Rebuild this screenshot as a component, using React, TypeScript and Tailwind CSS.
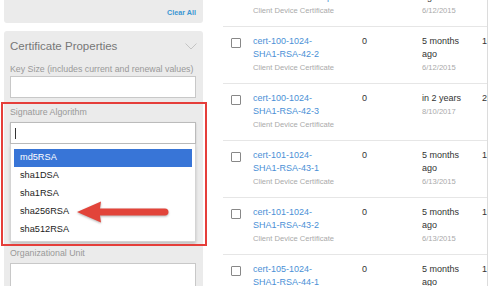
const certs = [
  { l1: 'cert-100-1024-', l2: 'SHA1-RSA-42-1-update', when: ['5 months', 'ago'], date: '6/12/2015', cnt: '10' },
  { l1: 'cert-100-1024-', l2: 'SHA1-RSA-42-2', when: ['5 months', 'ago'], date: '6/12/2015', cnt: '10' },
  { l1: 'cert-100-1024-', l2: 'SHA1-RSA-42-3', when: ['in 2 years'], date: '8/10/2017', cnt: '20' },
  { l1: 'cert-101-1024-', l2: 'SHA1-RSA-43-1', when: ['5 months', 'ago'], date: '6/13/2015', cnt: '10' },
  { l1: 'cert-101-1024-', l2: 'SHA1-RSA-43-2', when: ['5 months', 'ago'], date: '6/13/2015', cnt: '10' },
  { l1: 'cert-105-1024-', l2: 'SHA1-RSA-44-1', when: ['5 months', 'ago'], date: '6/13/2015', cnt: '10' },
]

const algorithms = ['md5RSA', 'sha1DSA', 'sha1RSA', 'sha256RSA', 'sha512RSA']

function Arrow() {
  return (
    <svg width="98" height="28" viewBox="0 0 98 28" className="absolute left-[70px] top-[167px] drop-shadow-[0_1px_1px_rgba(0,0,0,0.3)]">
      <path d="M3 14 L27 3.5 L26 10.5 L91 10.5 A3.5 3.5 0 0 1 91 17.5 L26 17.5 L27 24.5 Z" fill="#e2443a" />
    </svg>
  )
}

function FilterPanel() {
  return (
    <div className="w-[199px] h-[286px] ml-[4px] shrink-0 flex flex-col">
      <div className="h-[23px] shrink-0 bg-[#ebebeb] rounded-b-[3px] flex items-end justify-end pr-[7px] pb-[5px]">
        <span className="text-[7.2px] leading-[10px] font-bold text-[#3b97d3]">Clear All</span>
      </div>
      <div className="relative mt-[8px] flex-1 min-h-0 bg-[#ebebeb] rounded-t-[3px] px-[6px] pt-[7px] flex flex-col">
        <div className="flex items-center justify-between">
          <span className="text-[11.5px] leading-[16px] text-[#777]">Certificate Properties</span>
          <svg width="12" height="7" viewBox="0 0 12 7" className="mt-[1px]">
            <path d="M0.5 0.5 L6 6 L11.5 0.5" fill="none" stroke="#c4c4c4" strokeWidth="1" />
          </svg>
        </div>
        <div className="mt-[9px] text-[8.8px] leading-[12px] text-[#999] whitespace-nowrap">Key Size (includes current and renewal values)</div>
        <div className="mt-[1px] w-[186px] h-[22px] shrink-0 bg-white border border-[#c8c8c8]" />

        <div className="mt-[8px] text-[8.8px] leading-[12px] text-[#999]">Signature Algorithm</div>
        <div className="mt-[4px] w-[186px] h-[22px] shrink-0 bg-white border border-[#bbb] shadow-[0_1px_2px_rgba(0,0,0,0.15)] flex items-center pl-[4px]">
          <div className="w-px h-[11px] bg-[#333]" />
        </div>
        <div className="w-[186px] shrink-0 bg-white border border-[#d4d4d4] border-t-0 rounded-b-[2px] shadow-[0_2px_3px_rgba(0,0,0,0.18)] px-[3px] pt-[5px] pb-[2px] flex flex-col">
          {algorithms.map((a, i) => (
            <div
              key={a}
              className={`h-[18px] flex items-center pl-[6px] text-[9.2px] ${i === 0 ? 'bg-[#3875d7] text-white' : 'text-[#222]'}`}
            >
              {a}
            </div>
          ))}
        </div>

        <div className="mt-[5px] text-[8.8px] leading-[12px] text-[#999]">Organizational Unit</div>
        <div className="mt-[4px] w-[186px] h-[30px] shrink-0 bg-white border border-[#c8c8c8]" />

        <div className="absolute left-[-3px] top-[71px] w-[206px] h-[144px] border-2 border-[#e53e3a]" />
        <Arrow />
      </div>
    </div>
  )
}

function CertRow({ c }: { c: (typeof certs)[number] }) {
  return (
    <div className="h-[57px] border-b border-[#e6e6e6] flex pl-[8px] pt-[8px] shrink-0">
      <div className="w-[10px] h-[10px] mt-[3px] border border-[#888] rounded-[1px] shrink-0" />
      <div className="ml-[12px] w-[109px] shrink-0">
        <div className="text-[9px] leading-[13px] text-[#4a8fd6]">{c.l1}</div>
        <div className="text-[9px] leading-[13px] text-[#4a8fd6]">{c.l2}</div>
        <div className="text-[7.6px] leading-[13px] text-[#aaa]">Client Device Certificate</div>
      </div>
      <div className="w-[60px] shrink-0 text-[9px] leading-[13px] text-[#333]">0</div>
      <div className="w-[60px] shrink-0">
        {c.when.map((w) => (
          <div key={w} className="text-[9px] leading-[13px] text-[#333]">{w}</div>
        ))}
        <div className="text-[7.6px] leading-[13px] text-[#aaa]">{c.date}</div>
      </div>
      <div className="text-[9px] leading-[13px] text-[#333] whitespace-nowrap">{c.cnt}</div>
    </div>
  )
}

export default function App() {
  return (
    <div className="w-[489px] h-[286px] overflow-hidden bg-white flex font-['Liberation_Sans',Arial,sans-serif]">
      <FilterPanel />
      <div className="ml-[20px] w-[265px] h-[286px] overflow-hidden border-r border-[#dcdcdc]">
        <div className="mt-[-30px] flex flex-col">
          {certs.map((c, i) => (
            <CertRow key={i} c={c} />
          ))}
        </div>
      </div>
    </div>
  )
}
